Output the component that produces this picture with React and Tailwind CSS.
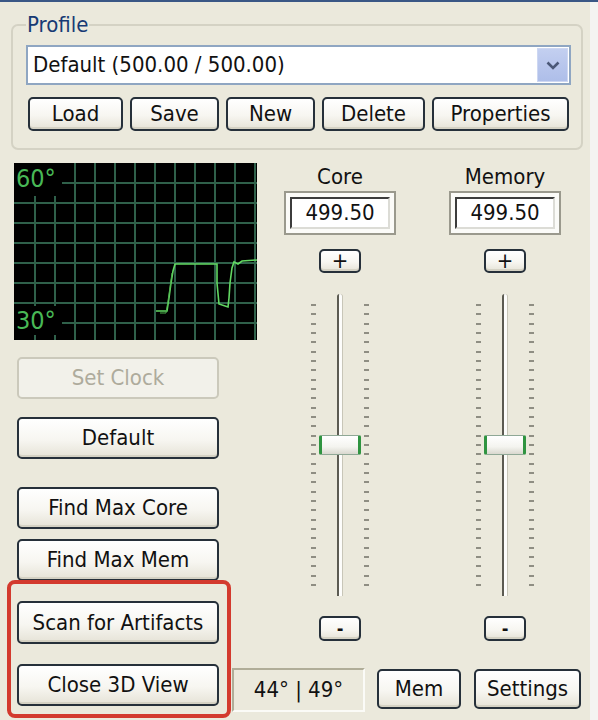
import React from "react";

const FONT = "font-['DejaVu_Sans_Condensed','Liberation_Sans',sans-serif]";

function Btn({ children, className = "", disabled = false }) {
  return (
    <div
      className={
        "flex shrink-0 items-center justify-center rounded-[5px] text-[22px] leading-none " +
        (disabled
          ? "border-2 border-[#cbc9bb] bg-[#f2f1ea] text-[#aeab9c] "
          : "border-2 border-[#26303a] bg-[linear-gradient(#ffffff,#f7f6f1_55%,#e6e3d7)] text-[#111] shadow-[inset_0_-2px_0_#d5d2c4] ") +
        className
      }
    >
      {children}
    </div>
  );
}

function Graph() {
  const vx = Array.from({ length: 12 }, (_, i) => 21 + i * 20);
  const hy = Array.from({ length: 8 }, (_, i) => 20 + i * 20);
  const trace =
    "142,148 153,148 155,135 157,120 159,108 161,101 170,101 203,101 203,120 205,141 214,144 215,135 216,120 218,105 220,99 224,101 228,98 243,97";
  return (
    <div className="relative ml-[14px] h-[177px] w-[243px] shrink-0 overflow-hidden bg-black">
      <svg className="absolute inset-0" width="243" height="177" viewBox="0 0 243 177">
        {vx.map((x) => (
          <line key={"v" + x} x1={x} y1="0" x2={x} y2="177" stroke="#2f604a" strokeWidth="2" />
        ))}
        {hy.map((y) => (
          <line key={"h" + y} x1="0" y1={y} x2="243" y2={y} stroke="#2f604a" strokeWidth="2" />
        ))}
        <polyline points={trace} fill="none" stroke="#62d862" strokeWidth="1.6" />
        <polyline
          points="146,150 152,150 154,138 156,124 158,110"
          fill="none"
          stroke="#4fb24f"
          strokeWidth="1"
        />
      </svg>
      <div className="absolute left-0 top-0 flex h-[33px] w-[48px] items-start bg-black pl-[2px] pt-[3px] text-[25px] leading-none text-[#48b856]">
        60°
      </div>
      <div className="absolute left-0 top-[143px] flex h-[29px] w-[48px] items-start bg-black pl-[2px] pt-[2px] text-[25px] leading-none text-[#48b856]">
        30°
      </div>
    </div>
  );
}

function Slider() {
  const ticks = Array.from({ length: 31 }, (_, i) => i);
  const col = (
    <div className="flex h-[282px] w-[5px] flex-col justify-between">
      {ticks.map((t) => (
        <div key={t} className="h-[2px] w-[5px] bg-[#8f8e83]" />
      ))}
    </div>
  );
  return (
    <div className="relative mt-[21px] flex h-[304px] w-[112px]">
      <div className="ml-[27px] mt-[10px]">{col}</div>
      <div className="ml-[21px] h-[302px] w-[5px] rounded-t-[3px] border-l-2 border-[#5c5b52] bg-[#fdfdfb] shadow-[1px_0_0_#c8c6b8]" />
      <div className="ml-[22px] mt-[10px]">{col}</div>
      <div className="absolute left-[35px] top-[141px] h-[20px] w-[42px] rounded-[2px] border border-x-[3px] border-[#8fa896] border-x-[#2f9440] bg-[linear-gradient(#ffffff,#f4f4ef_60%,#d9d8cf)]" />
    </div>
  );
}

function Channel({ label }) {
  return (
    <div className="flex w-[112px] shrink-0 flex-col items-center">
      <div className="h-[28px] text-[22px] leading-[28px] text-[#111]">{label}</div>
      <div className="flex h-[44px] w-[112px] items-center justify-center border-2 border-[#9a998d] bg-[#fbfbf8]">
        <div className="flex h-[32px] w-[100px] items-center justify-center border-2 border-b-[#dcdcd6] border-l-[#3c3c3c] border-r-[#dcdcd6] border-t-[#3c3c3c] bg-white text-[22px] leading-none text-[#111]">
          499.50
        </div>
      </div>
      <Btn className="mt-[14px] h-[24px] w-[42px] !text-[22px]">+</Btn>
      <Slider />
      <Btn className="mt-[18px] h-[25px] w-[42px] !text-[18px] font-bold">-</Btn>
    </div>
  );
}

export default function App() {
  return (
    <div className={"h-[720px] w-[598px] overflow-hidden bg-[#ebe9dc] " + FONT}>
      <div className="h-[2px] w-full bg-[#3a5785]" />
      <div className="flex">
        <div className="w-[590px] shrink-0">
          <fieldset className="ml-[11px] mt-[11px] w-[572px] rounded-[7px] border-2 border-[#d4d2c4] pb-[17px] pl-[13px] pr-[10px]">
            <legend className="px-[1px] text-[22px] leading-[24px] text-[#173a74]">Profile</legend>
            <div className="mt-[8px] flex h-[40px] w-[545px] items-center justify-between border-2 border-[#8fa6c2] bg-white pl-[5px] pr-[1px]">
              <span className="text-[22px] leading-none text-[#111]">Default (500.00 / 500.00)</span>
              <div className="flex h-[34px] w-[31px] items-center justify-center border border-[#cdd7f2] bg-[linear-gradient(#c3cff0,#aebee9)]">
                <svg width="14" height="9" viewBox="0 0 14 9">
                  <polyline points="1.5,1.5 7,7 12.5,1.5" fill="none" stroke="#4b5878" strokeWidth="2.6" />
                </svg>
              </div>
            </div>
            <div className="ml-[2px] mt-[12px] flex gap-[7px]">
              <Btn className="h-[34px] w-[95px]">Load</Btn>
              <Btn className="h-[34px] w-[89px]">Save</Btn>
              <Btn className="h-[34px] w-[89px]">New</Btn>
              <Btn className="h-[34px] w-[103px]">Delete</Btn>
              <Btn className="h-[34px] w-[137px]">Properties</Btn>
            </div>
          </fieldset>

          <div className="mt-[13px] flex">
            <div className="flex w-[232px] shrink-0 flex-col">
              <Graph />
              <Btn disabled className="ml-[17px] mt-[17px] h-[42px] w-[202px]">Set Clock</Btn>
              <Btn className="ml-[17px] mt-[18px] h-[42px] w-[202px]">Default</Btn>
              <Btn className="ml-[17px] mt-[28px] h-[42px] w-[202px]">Find Max Core</Btn>
              <Btn className="ml-[17px] mt-[10px] h-[42px] w-[202px]">Find Max Mem</Btn>
              <div className="ml-[7px] mt-[-1px] flex h-[138px] w-[224px] flex-col rounded-[8px] border-4 border-[#d33a2e] pl-[6px] pt-[17px]">
                <Btn className="h-[43px] w-[202px]">Scan for Artifacts</Btn>
                <Btn className="mt-[20px] h-[42px] w-[202px]">Close 3D View</Btn>
              </div>
            </div>

            <div className="flex flex-1 flex-col">
              <div className="flex">
                <div className="ml-[52px]">
                  <Channel label="Core" />
                </div>
                <div className="ml-[53px]">
                  <Channel label="Memory" />
                </div>
              </div>
              <div className="mt-[27px] flex items-start">
                <div className="flex h-[44px] w-[133px] items-center justify-center border-2 border-b-[#fbfbf7] border-l-[#b0ad98] border-r-[#fbfbf7] border-t-[#b0ad98] text-[22px] leading-none text-[#111]">
                  44° | 49°
                </div>
                <Btn className="ml-[12px] mt-[1px] h-[40px] w-[84px]">Mem</Btn>
                <Btn className="ml-[13px] mt-[1px] h-[40px] w-[107px]">Settings</Btn>
              </div>
            </div>
          </div>
        </div>
        <div className="h-[720px] flex-1 bg-[#f4f4f1]" />
      </div>
    </div>
  );
}
